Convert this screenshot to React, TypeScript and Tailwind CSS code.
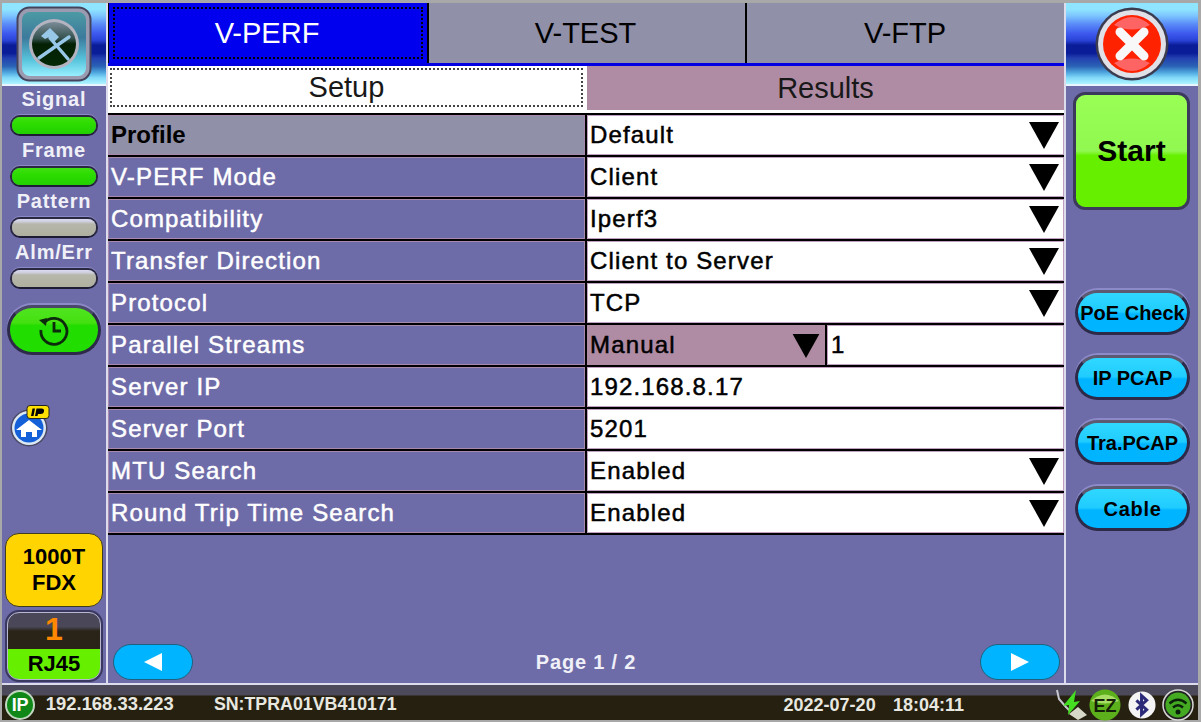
import type { ReactNode } from "react";

const rows = [
  { label: "Profile", value: "Default", arrow: true, active: true },
  { label: "V-PERF Mode", value: "Client", arrow: true },
  { label: "Compatibility", value: "Iperf3", arrow: true },
  { label: "Transfer Direction", value: "Client to Server", arrow: true },
  { label: "Protocol", value: "TCP", arrow: true },
  { label: "Parallel Streams", value: "Manual", split: "1" },
  { label: "Server IP", value: "192.168.8.17" },
  { label: "Server Port", value: "5201" },
  { label: "MTU Search", value: "Enabled", arrow: true },
  { label: "Round Trip Time Search", value: "Enabled", arrow: true },
];

const headerBg =
  "bg-[linear-gradient(180deg,#8fe4ff_0%,#8fe4ff_8%,#7cc4ff_16%,#5a8cf8_26%,#3c58ee_38%,#2a44d8_46%,#0a1c98_52%,#0a1c98_62%,#2340b0_68%,#2a62b4_78%,#50a8e0_86%,#7fd8f8_92%,#b0f4ff_100%)]";

function Arrow({ small }: { small?: boolean }) {
  return (
    <svg width={small ? 28 : 30} height={small ? 25 : 28} viewBox="0 0 30 28" className="shrink-0">
      <polygon points="0,1 30,1 15,28" fill="#000" />
    </svg>
  );
}

function Led({ on }: { on?: boolean }) {
  return (
    <div className="mx-auto h-[21px] w-[88px] rounded-[10px] border-2 border-t-[#2a2840] border-r-[#2a2840] border-b-[#1e1c34] border-l-[#2a2840] shadow-[0_-1px_0_#8c8ac8]">
      <div
        className={
          on
            ? "h-full rounded-[8px] bg-[linear-gradient(180deg,#40e010_0%,#2cdc00_40%,#22d000_100%)]"
            : "h-full rounded-[8px] bg-[linear-gradient(180deg,#dcdcf4_0%,#d0d0e0_14%,#b6b6aa_30%,#b0b0a0_100%)]"
        }
      />
    </div>
  );
}

function SideLabel({ children }: { children: ReactNode }) {
  return (
    <div className="h-[30px] text-center text-[20px] leading-[28px] font-bold tracking-[0.8px] text-[#f0f0f8]">
      {children}
    </div>
  );
}

function Pill({ children, className }: { children: ReactNode; className?: string }) {
  return (
    <div
      className={
        "flex h-[45px] w-[115px] items-center justify-center rounded-[23px] border-[3px] border-t-[#5c5a70] border-r-[#2c2a48] border-b-[#2c2a48] border-l-[#2c2a48] bg-[linear-gradient(180deg,#30d8ff_0%,#20ccff_48%,#00b4ff_54%,#00b4ff_100%)] text-[20px] leading-none font-bold whitespace-nowrap text-black shadow-[0_-2px_0_#8c8ac8] " +
        (className ?? "")
      }
    >
      {children}
    </div>
  );
}

function ToolsIcon() {
  return (
    <svg width="76" height="76" viewBox="0 0 76 76">
      <defs>
        <linearGradient id="tile" x1="0" y1="0" x2="0" y2="1">
          <stop offset="0" stopColor="#4c9aa4" />
          <stop offset="0.4" stopColor="#3c7a9c" />
          <stop offset="0.75" stopColor="#58c4dc" />
          <stop offset="1" stopColor="#98f0ff" />
        </linearGradient>
        <linearGradient id="disc" x1="0" y1="0" x2="0" y2="1">
          <stop offset="0" stopColor="#7a8c98" />
          <stop offset="0.38" stopColor="#33504c" />
          <stop offset="0.5" stopColor="#042004" />
          <stop offset="1" stopColor="#042804" />
        </linearGradient>
      </defs>
      <rect x="1.5" y="1.5" width="73" height="73" rx="12" fill="#9a9ab0" stroke="#44445c" strokeWidth="2" />
      <rect x="6" y="6" width="64" height="64" rx="8" fill="url(#tile)" />
      <circle cx="38" cy="38" r="25" fill="#b4b4c0" />
      <circle cx="38" cy="38" r="22" fill="url(#disc)" />
      <path d="M34 32 L52 53" stroke="#98c8e8" strokeWidth="3.4" strokeLinecap="round" />
      <path d="M53 31 L23 52" stroke="#98c8e8" strokeWidth="3.4" strokeLinecap="round" />
      <path d="M25 30 L34 22 L43 31 L38 36 L33 31 L29 33Z" fill="#98c8e8" />
    </svg>
  );
}

function CloseIcon() {
  return (
    <svg width="74" height="74" viewBox="0 0 74 74">
      <circle cx="37" cy="37" r="36.5" fill="#3c3c50" />
      <circle cx="37" cy="37" r="34" fill="#e0e0e8" />
      <circle cx="37" cy="37" r="29" fill="#ff2200" />
      <path d="M19 18 Q37 2 55 18 Q37 27 19 18Z" fill="#ff6464" />
      <path d="M19 56 Q37 72 55 56 Q37 47 19 56Z" fill="#ff6464" />
      <path d="M25 25 L49 49 M49 25 L25 49" stroke="#f8f8f8" strokeWidth="9" strokeLinecap="round" />
    </svg>
  );
}

function HistoryIcon() {
  return (
    <svg width="32" height="32" viewBox="0 0 32 32" fill="none" stroke="#0c2a0c" strokeWidth="2.8">
      <path d="M6 9 A13 13 0 1 1 3 16" />
      <path d="M1 6 L9 4 L8 12Z" fill="#0c2a0c" stroke="none" />
      <path d="M16 8 V17 H23" />
    </svg>
  );
}

function HomeIcon() {
  return (
    <svg width="42" height="42" viewBox="0 0 42 42">
      <circle cx="20" cy="23" r="18.5" fill="#4a4a64" />
      <circle cx="20" cy="23" r="17" fill="#dce8f4" />
      <circle cx="20" cy="23" r="14.5" fill="#1460d8" />
      <path d="M20 15 L33 25 H28 V32 H23 V27 H17 V32 H12 V25 H7Z" fill="#fff" />
      <rect x="18" y="0.5" width="22" height="13" rx="3" fill="#ffe000" stroke="#222" strokeWidth="1" />
      <path d="M23.5 3.5 H26 L24.5 11 H22Z M27.5 3.5 H32.5 Q35.5 3.5 35 6.5 Q34.5 9 31.5 9 H29 L28.5 11 H26Z" fill="#000" />
    </svg>
  );
}

function StatusIcons() {
  return (
    <div className="flex items-center">
      <svg width="34" height="32" viewBox="0 0 34 32">
        <path d="M3 1 L5 10 L12 18 L16 22" stroke="#c8c8d0" strokeWidth="2" fill="none" />
        <path d="M22 1 L20 13 L26 12 L14 26 L15 16 L9 17Z" fill="#44dd22" />
        <path d="M15 25 L24 18 L33 26 L24 31Z" fill="#d8d8c8" />
      </svg>
      <svg width="32" height="32" viewBox="0 0 32 32" className="ml-[1px]">
        <circle cx="16" cy="16" r="15.5" fill="#5cb01c" />
        <path d="M2 12 Q16 -1 30 12 Q16 17 2 12Z" fill="#a8dd66" />
        <text x="16" y="23" textAnchor="middle" fontFamily="Liberation Sans" fontSize="18" fontWeight="700" fill="#142008">
          EZ
        </text>
      </svg>
      <svg width="28" height="28" viewBox="0 0 30 30" className="ml-[7px]">
        <circle cx="15" cy="15" r="14.5" fill="#f4f4f4" />
        <path d="M9 10 L20 20 L14.5 25 V5 L20 10 L9 20" fill="none" stroke="#2a2a78" strokeWidth="3.2" />
      </svg>
      <svg width="32" height="32" viewBox="0 0 32 32" className="ml-[6px]">
        <circle cx="16" cy="16" r="15" fill="#222" stroke="#d8d8d8" strokeWidth="1.5" />
        <circle cx="16" cy="16" r="12.5" fill="#44aa22" />
        <circle cx="16" cy="23" r="2.5" fill="#0a200a" />
        <path d="M11 18.5 Q16 14 21 18.5 M7.5 14.5 Q16 7 24.5 14.5" fill="none" stroke="#0a200a" strokeWidth="2.4" />
      </svg>
    </div>
  );
}

function NavArrow({ dir }: { dir: "left" | "right" }) {
  return (
    <div className="flex h-[36px] w-[80px] items-center justify-center rounded-[18px] border border-[#20607c] bg-[#00b4ff]">
      <svg width="18" height="18" viewBox="0 0 18 18">
        <polygon points={dir === "left" ? "0,9 18,0 18,18" : "18,9 0,0 0,18"} fill="#fff" />
      </svg>
    </div>
  );
}

export default function App() {
  return (
    <div className="flex h-[722px] w-[1201px] flex-col overflow-hidden bg-[#a8a8a8] pt-[3px] pr-[3px] pb-[2px] pl-[2px] font-['Liberation_Sans',Arial,sans-serif]">
      <div className="flex h-[680px] bg-[#6e6ca8]">
        {/* left column */}
        <aside className="flex w-[104px] shrink-0 flex-col">
          <div className={"flex h-[83px] items-center justify-center border-b-2 border-[#e8f4ff] " + headerBg}>
            <ToolsIcon />
          </div>
          <div className="-mt-[1px]">
            <SideLabel>Signal</SideLabel>
            <Led on />
            <SideLabel>Frame</SideLabel>
            <Led on />
            <SideLabel>Pattern</SideLabel>
            <Led />
            <SideLabel>Alm/Err</SideLabel>
            <Led />
          </div>
          <div className="mx-auto mt-[16px] flex h-[50px] w-[94px] items-center justify-center rounded-[25px] border-[3px] border-t-[#4a4868] border-r-[#2c2a48] border-b-[#2c2a48] border-l-[#2c2a48] bg-[linear-gradient(180deg,#50e420_0%,#44e010_34%,#22dd00_40%,#22dd00_100%)] shadow-[0_-2px_0_#8c8ac8]">
            <HistoryIcon />
          </div>
          <div className="mt-[50px] ml-[7px]">
            <HomeIcon />
          </div>
          <div className="mx-auto mt-[86px] flex h-[74px] w-[98px] flex-col items-center justify-center rounded-[14px] border border-[#403c20] bg-[#ffd400] text-[22px] leading-[26px] font-bold text-black">
            <div>1000T</div>
            <div>FDX</div>
          </div>
          <div className="mx-auto mt-[3px] flex h-[72px] w-[98px] flex-col overflow-hidden rounded-[14px] border-[3px] border-[#3a3860] outline-[1px] -outline-offset-[3px] outline-[#b8b8d0]">
            <div className="flex h-[36px] items-start justify-center bg-[linear-gradient(180deg,#4a4858_0%,#4a4858_38%,#2a2418_50%,#2a2418_100%)] text-[32px] leading-none font-bold text-[#ff8800]">
              1
            </div>
            <div className="flex flex-1 items-center justify-center bg-[#66f000] text-[22px] leading-none font-bold text-black">
              RJ45
            </div>
          </div>
        </aside>

        <div className="w-[2px] shrink-0 bg-[#dcdcec]" />

        {/* centre */}
        <main className="flex w-[956px] shrink-0 flex-col">
          <div className="flex h-[60px] bg-black text-[29px] leading-none">
            <div className="ml-[1px] w-[318px] bg-[#0000ee] p-[4px] text-white">
              <div className="flex h-full items-center justify-center border-[2px] border-dotted border-[#000] pr-[2px]">
                V-PERF
              </div>
            </div>
            <div className="ml-[2px] flex w-[316px] items-center justify-center bg-[#9090a8] pr-[3px] text-black">
              V-TEST
            </div>
            <div className="ml-[2px] flex w-[317px] items-center justify-center bg-[#9090a8] pr-[1px] text-black">
              V-FTP
            </div>
          </div>
          <div className="h-[3px] bg-[#0000e0]" />
          <div className="flex h-[47px] bg-white text-[29px] leading-none">
            <div className="flex h-[44px] w-[477px] items-center justify-center bg-white p-[2px] pb-[3px] text-[#181818]">
              <div className="flex h-full w-full items-center justify-center border-[2px] border-dotted border-[#444]">
                Setup
              </div>
            </div>
            <div className="ml-[2px] flex h-[44px] w-[477px] items-center justify-center bg-[#b08ca4] text-[#181818]">
              Results
            </div>
          </div>
          <div className="bg-black">
            {rows.map((r) => (
              <div key={r.label} className="flex h-[42px] gap-[2px] border-t-2 border-black text-[24px] leading-none tracking-[1.15px]">
                <div
                  className={
                    "flex w-[477px] items-center border border-[#a888ac] pl-[2px] " +
                    (r.active
                      ? "bg-[#9090a8] font-bold tracking-normal text-black"
                      : "bg-[#6e6ca8] text-white [-webkit-text-stroke:0.5px_#fff]")
                  }
                >
                  {r.label}
                </div>
                <div className="flex w-[477px] text-black [-webkit-text-stroke:0.5px_#000]">
                  {r.split ? (
                    <>
                      <div className="flex w-[238px] items-center justify-between bg-[#b08ca4] pr-[5px] pl-[3px]">
                        {r.value}
                        <Arrow small />
                      </div>
                      <div className="ml-[2px] flex flex-1 items-center border border-[#c0a0c0] bg-white pl-[3px]">
                        {r.split}
                      </div>
                    </>
                  ) : (
                    <div className="flex flex-1 items-center justify-between border border-[#c0a0c0] bg-white pr-[4px] pl-[2px]">
                      {r.value}
                      {r.arrow && <Arrow />}
                    </div>
                  )}
                </div>
              </div>
            ))}
            <div className="h-[2px] bg-black" />
          </div>
          <div className="mt-auto flex h-[41px] items-center justify-between pr-[4px] pb-[1px] pl-[5px]">
            <NavArrow dir="left" />
            <div className="-ml-[1px] text-[20px] leading-none font-bold tracking-[0.8px] text-[#f0f0f8]">Page 1 / 2</div>
            <NavArrow dir="right" />
          </div>
        </main>

        <div className="w-[2px] shrink-0 bg-[#dcdcec]" />

        {/* right column */}
        <aside className="flex w-[132px] shrink-0 flex-col">
          <div className={"flex h-[83px] items-center justify-center border-b-2 border-[#e8f4ff] " + headerBg}>
            <CloseIcon />
          </div>
          <div className="mt-[6px] ml-[7px] flex h-[118px] w-[117px] items-center justify-center rounded-[12px] border-[3px] border-[#3c3a5c] bg-[linear-gradient(180deg,#99ff55_0%,#90f850_50%,#66f000_54%,#66f000_100%)] text-[30px] leading-none font-bold text-black">
            Start
          </div>
          <div className="mt-[80px] ml-[9px] flex flex-col gap-[20px]">
            <Pill>PoE Check</Pill>
            <Pill>IP PCAP</Pill>
            <Pill>Tra.PCAP</Pill>
            <Pill className="mt-[1px] tracking-[0.7px]">Cable</Pill>
          </div>
        </aside>
      </div>

      {/* status bar */}
      <div className="flex h-[37px] items-center border-t-2 border-[#dcdcec] bg-[linear-gradient(180deg,#4c4a5a_0%,#4c4a5a_28%,#262010_32%,#262010_100%)] pt-[4px] pr-[4px] pl-[3px] text-[18.4px] leading-none font-bold text-[#e8e8e0]">
        <div className="flex h-[30px] w-[30px] items-center justify-center rounded-full border-2 border-[#c0d8c0] bg-[#108818] text-[18px] font-bold tracking-tight text-white">
          IP
        </div>
        <div className="ml-[11px] w-[169px]">192.168.33.223</div>
        <div className="w-[573px] text-[17.8px]">SN:TPRA01VB410171</div>
        <div className="w-[110px] text-[18px]">2022-07-20</div>
        <div className="w-[162px] text-[18px]">18:04:11</div>
        <StatusIcons />
      </div>
    </div>
  );
}
